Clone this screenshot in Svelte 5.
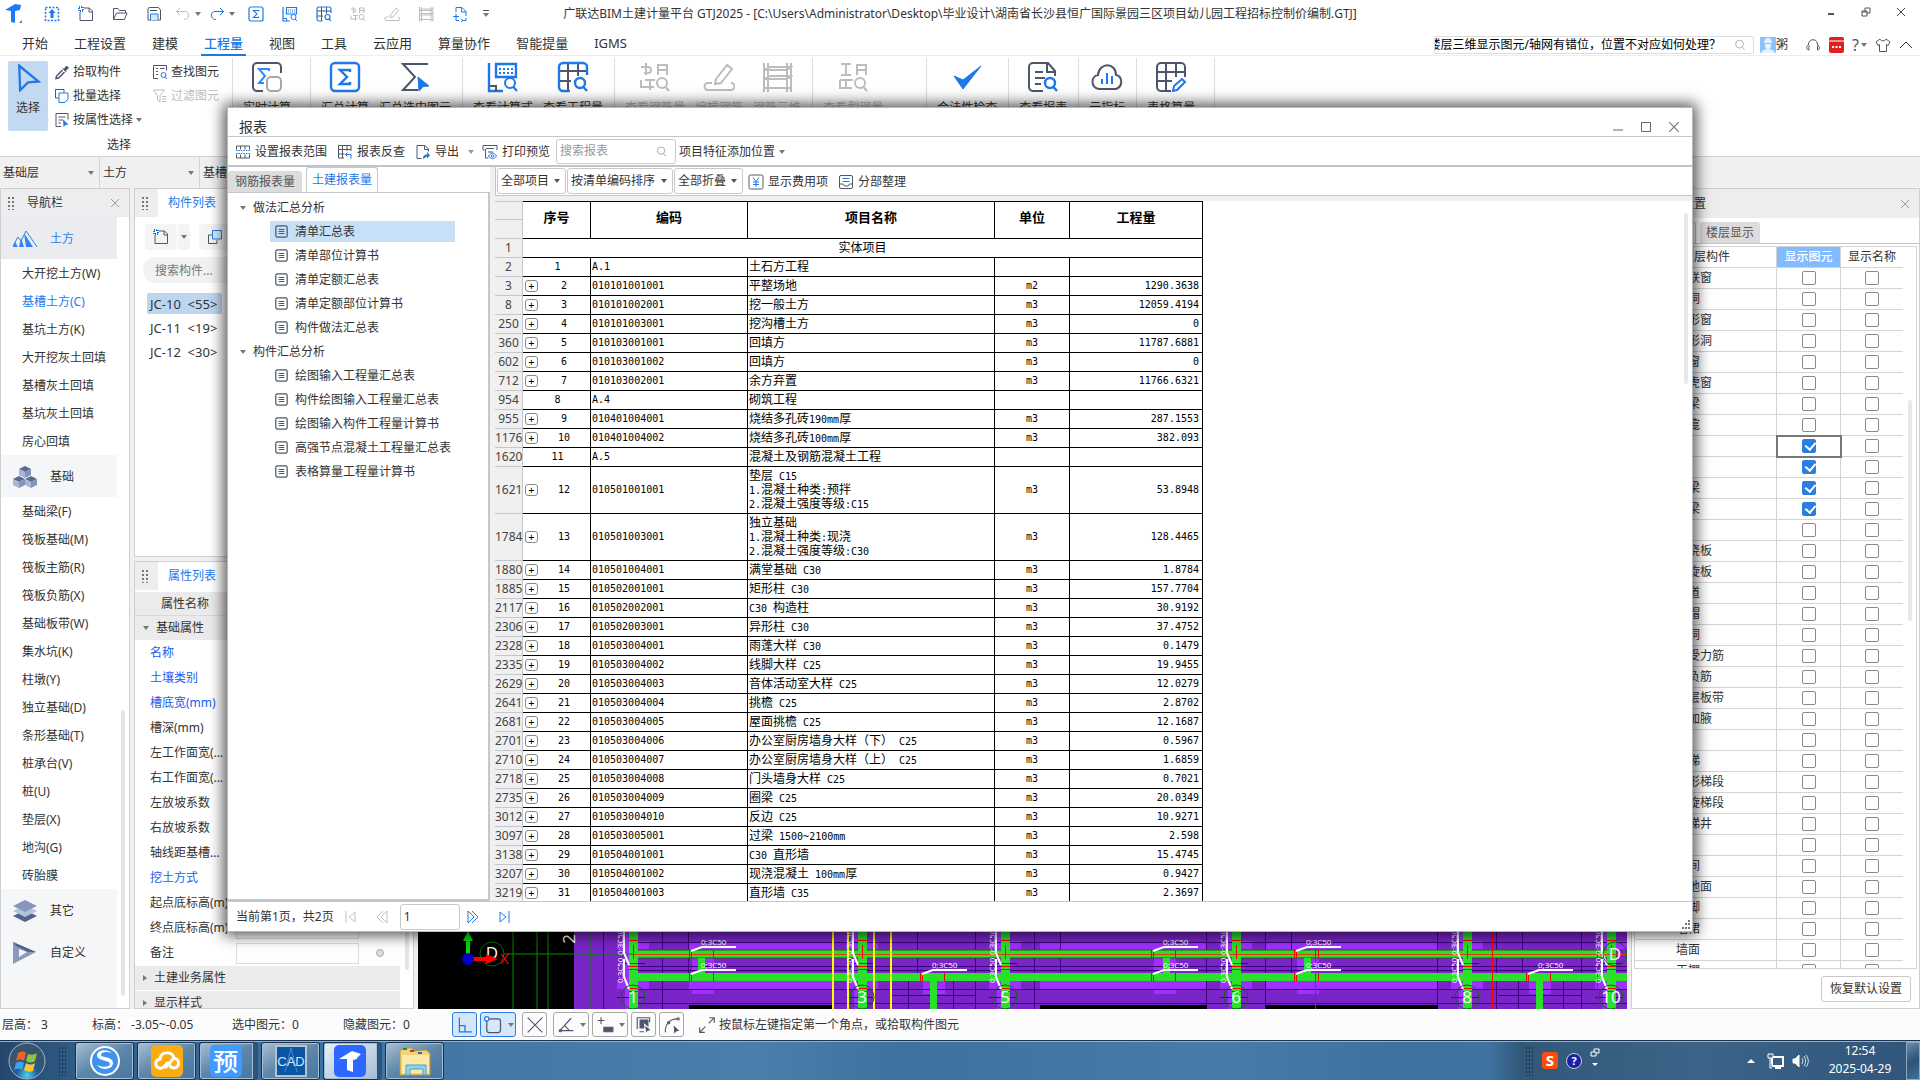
<script lang="ts">
  type Bill = { line: number; no: number | string; code: string; name: string; unit?: string; qty?: string };

  const search = '<circle cx="23" cy="22" r="5"/><path d="M26.5 26l3.5 4"/>';

  const icons: Record<string, string> = {
    sigmaBox: '<g stroke="var(--accent)"><rect x="2" y="2" width="28" height="28" rx="4" stroke-width="2.4"/><path d="M21 11V9H11l7 7-7 7h10v-2" stroke-width="2.4"/></g>',
    sigmaCursor: '<path d="M29 3H4l12 13L4 29h15"/><path d="M19 16l11 9-6 .6L20 30z" fill="var(--accent)" stroke="var(--accent)" stroke-width="1"/>',
    realtime: '<path d="M12 30H6a4 4 0 0 1-4-4V6a4 4 0 0 1 4-4h20a4 4 0 0 1 4 4v6"/><path d="M18 10V8H8l6 7-6 7h5" stroke="#2f8bff"/><rect x="16" y="16" width="14" height="14" rx="4" stroke="#a8a8a8" fill="#fff"/>',
    formula: '<g stroke="var(--accent)"><path d="M2 2v28h14M9 3h20v13H9z" stroke-width="2.4"/><path d="M12 8h15M12 12h15" stroke-dasharray="2 2"/>' + search + '</g><path d="M3 25h6v5"/>',
    gridSearch: '<path d="M2 10h28M2 20h12M11 2v28M21 2v13"/><g stroke="var(--accent)" stroke-width="2.4"><path d="M13 30H6a4 4 0 0 1-4-4V6a4 4 0 0 1 4-4h20a4 4 0 0 1 4 4v8"/>' + search + '</g>',
    rebarSearch: '<path d="M2 6h7a3 3 0 0 1 0 6H5M7 2v12M19 14V4h9v10M19 9h9M2 19v7h13M6 19h10M11 19v10"/>' + search,
    rebarPen: '<path d="M9 22H5a3 3 0 0 0 0 7h23a3 3 0 0 0 0-7M13 18L24 4l5 4-11 14-6 1z"/>',
    rebar3d: '<path d="M3 2v29M7 2v29M26 2v29M30 2v29M3 9h23l4-3H9zM3 18h23l4-3H9zM3 27h27"/>',
    steelSearch: '<path d="M4 3h10M9 3v11M4 14h10M20 14V4h9v10M20 9h9M3 19v8h12M3 19h13M9 19v8"/>' + search,
    check: '<path d="M3 15l9 13L30 5 12 19z" fill="var(--accent)" stroke="var(--accent)" stroke-width="1"/>',
    report: '<path d="M16 30H6a4 4 0 0 1-4-4V6a4 4 0 0 1 4-4h15l7 8v5M20 3v8h8M8 11h8M8 17h10M8 23h6"/><g stroke="var(--accent)" stroke-width="2.4">' + search + '</g>',
    cloud: '<path d="M8 28h17c8-3 6-13 0-14C25 1 8 1 7 14c-7 1-8 12 1 14z"/><path d="M11 23v-5M16 23V12M21 23v-8" stroke="var(--accent)"/>',
    tablePen: '<path d="M16 30H6a4 4 0 0 1-4-4V6a4 4 0 0 1 4-4h20a4 4 0 0 1 4 4v10M2 11h28M2 20h15M11 2v28M21 2v14"/><path d="M18 30l1-5 8-7 3 3-8 8z" stroke="var(--accent)"/>',
    pointer: '<path d="M6 2l22 18-12 1-9 9z" fill="none" stroke="var(--accent)" stroke-width="2.6"/>',
    up: '<rect x="3" y="3" width="26" height="26" stroke="var(--accent)" stroke-width="3" stroke-dasharray="4 3"/><path d="M16 6l7 8h-4v10h-6V14H9z" fill="var(--accent)" stroke="none"/>',
    fresh: '<path d="M12 4h11l6 6v19H4V12M22 4v8h7"/><path d="M2 2h8v8H2z" stroke="var(--accent)" stroke-dasharray="2 2" stroke-width="4"/>',
    open: '<path d="M3 27V5h9l3 4h12v5M3 27l6-13h21l-5 13z"/>',
    save: '<path d="M4 28V6a3 3 0 0 1 3-3h18l4 5v20zM8 9h14"/><path d="M9 28V16h15v12" stroke="var(--accent)" fill="#d9e9fc"/>',
    undo: '<path d="M10 4l-7 7 7 7M3 11h17c10 0 10 16-2 16"/>',
    redo: '<path d="M22 4l7 7-7 7M29 11H12C2 11 2 27 14 27" stroke="var(--accent)"/>',
    insert: '<path d="M8 12V3h12l8 8v9M19 3v9h9M20 29h8v-5M2 21h12M8 15v14h6M18 25l4 4-4 3" stroke="var(--accent)"/>',
    dropper: '<path d="M17 8l8 8M20 11l5-7 4 4-7 6z" fill="currentColor"/><path d="M17 12L5 24l-1 5 5-1 12-12" stroke-width="3"/>',
    batch: '<path d="M9 20H3V3h17v6"/><path d="M10 10h18v12l-6 7H10z" stroke="var(--accent)"/>',
    attrSelect: '<path d="M14 29H4V3h24v12M9 10h14M9 16h9M9 22h5"/><path d="M18 15l11 10-6 1-4 4z" fill="var(--accent)" stroke="none"/>',
    findPart: '<path d="M12 29H3V3h26v10M8 9h4M16 9h9M8 15h4M8 21h4"/><g stroke="var(--accent)">' + search + '</g>',
    filter: '<path d="M3 4h22L16 15v13l-5-4v-9zM20 17h9M20 22h9M20 27h9"/>',
    range: '<path d="M3 11V4h26v7M3 21v7h26v-7M11 4v7M20 4v7M11 21v7M20 21v7"/><path d="M2 13h28M2 19h28" stroke="var(--accent)" stroke-dasharray="3 2"/>',
    backCheck: '<path d="M28 14V3H3v25h11M3 11h25M3 20h12M11 3v25M20 3v11"/><path d="M21 17l-4 4 4 4M17 21h11v8" stroke="var(--accent)"/>',
    exportDoc: '<path d="M13 29H4V3h16l7 7v5M19 3v8h8"/><path d="M16 30c0-7 3-9 8-9v-5l6 7-6 6v-4z" fill="var(--accent)" stroke="none"/>',
    preview: '<path d="M5 12H2V3h28v9M8 9h16M7 10v18h6M12 16h10"/><path d="M13 24c5-8 11-8 16 0-5 7-11 7-16 0z" stroke="var(--accent)"/><circle cx="21" cy="24" r="2.5" stroke="var(--accent)"/>',
    fee: '<rect x="2" y="2" width="28" height="28" rx="3"/><path d="M10 7l6 8 6-8M10 16h12M10 21h12M16 15v11" stroke="var(--accent)"/>',
    arrange: '<path d="M6 3h20a3 3 0 0 1 3 3v20a3 3 0 0 1-3 3H6a3 3 0 0 1-3-3V6a3 3 0 0 1 3-3zM3 20h7l3 4h7l3-4h6"/><path d="M9 9h14M9 15h14" stroke="var(--accent)"/>',
    sheet: '<rect x="2" y="2" width="28" height="28" rx="4" stroke-width="3"/><path d="M9 11h14M9 16h14M9 21h14" stroke-width="2.6"/>',
    magnify: '<circle cx="15" cy="14" r="9"/><path d="M21 21l6 7"/>',
    headset: '<path d="M8 26C2 26 2 17 7 16 6 2 26 2 25 16c5 1 5 10 0 10v-9M8 26v-9"/>',
    shirt: '<path d="M10 4L2 10l4 7 3-2v14h14V15l3 2 4-7-8-6c-2 5-10 5-12 0z"/>',
    lines: '<path d="M7 4v23h20M7 17h9v10" stroke="var(--accent)" stroke-width="2"/>',
    box: '<rect x="6" y="6" width="22" height="22" rx="4"/><circle cx="6" cy="6" r="3.5" stroke="var(--accent)" fill="#fff"/>',
    cross: '<path d="M3 3l26 26M29 3L3 29"/>',
    angle: '<path d="M25 4L5 26h24M14 17l8 9"/><circle cx="6" cy="26" r="2"/>',
    plusBox: '<path d="M3 8h12M9 2v12"/><path d="M14 20h16v8H14z" fill="currentColor"/>',
    stack: '<path d="M9 7h14v14H9z" fill="currentColor"/><path d="M4 23V3h22v8M8 28h8"/><path d="M17 15l13 11-7 1-4 5z" fill="currentColor" stroke="#fff"/>',
    curve: '<path d="M4 29C4 14 12 5 26 5"/><circle cx="27" cy="5" r="2"/><circle cx="10" cy="12" r="2"/><path d="M19 17l10 9-5 1-4 4z" fill="currentColor" stroke="none"/>',
    resize: '<path d="M19 13L29 3M20 3h9v9M13 19L3 29M3 20v9h9"/>',
    overlap: '<path d="M10 12H3v17h17v-7"/><path d="M11 3h18v17H11z" stroke="var(--accent)" fill="#d9e9fc"/>'
  };

  const quick = [
    ['up', ''], ['fresh', ''], ['open', ''], ['save', ''], ['undo', 'dim drop'], ['redo', 'drop'], ['sigmaBox', ''],
    ['formula', 'blue'], ['gridSearch', ''], ['rebarSearch', 'dim'], ['rebarPen', 'dim'], ['rebar3d', 'dim'], ['insert', '']
  ];
  const menus = ['开始', '工程设置', '建模', '工程量', '视图', '工具', '云应用', '算量协作', '智能提量', 'IGMS'];

  const ribbon: { wide?: string; off?: boolean; tools: string[][] }[] = [
    { wide: 'wide', tools: [['realtime', '实时计算']] },
    { tools: [['sigmaBox', '汇总计算'], ['sigmaCursor', '汇总选中图元']] },
    { tools: [['formula', '查看计算式'], ['gridSearch', '查看工程量']] },
    { off: true, tools: [['rebarSearch', '查看钢筋量'], ['rebarPen', '编辑钢筋'], ['rebar3d', '钢筋三维']] },
    { off: true, wide: 'wider', tools: [['steelSearch', '查看型钢量']] },
    { tools: [['check', '合法性检查']] },
    { tools: [['report', '查看报表']] },
    { tools: [['cloud', '云指标']] },
    { wide: 'wide', tools: [['tablePen', '表格算量']] }
  ];

  const earthItems = ['大开挖土方(W)', '基槽土方(C)', '基坑土方(K)', '大开挖灰土回填', '基槽灰土回填', '基坑灰土回填', '房心回填'];
  const baseItems = ['基础梁(F)', '筏板基础(M)', '筏板主筋(R)', '筏板负筋(X)', '基础板带(W)', '集水坑(K)', '柱墩(Y)', '独立基础(D)', '条形基础(T)', '桩承台(V)', '桩(U)', '垫层(X)', '地沟(G)', '砖胎膜'];
  const parts = ['JC-10  <55>', 'JC-11  <19>', 'JC-12  <30>'];

  const props = [
    { name: '名称', key: true, value: 'JC-10' },
    { name: '土壤类别', key: true, value: '三类土' },
    { name: '槽底宽(mm)', key: true, value: '' },
    { name: '槽深(mm)', value: '' },
    { name: '左工作面宽(mm)', value: '' },
    { name: '右工作面宽(mm)', value: '' },
    { name: '左放坡系数', value: '0' },
    { name: '右放坡系数', value: '0' },
    { name: '轴线距基槽左边线', value: '' },
    { name: '挖土方式', key: true, value: '' },
    { name: '起点底标高(m)', value: '' },
    { name: '终点底标高(m)', value: '' },
    { name: '备注', value: '' }
  ];

  const reports = [
    { group: '做法汇总分析', items: ['清单汇总表', '清单部位计算书', '清单定额汇总表', '清单定额部位计算书', '构件做法汇总表'] },
    { group: '构件汇总分析', items: ['绘图输入工程量汇总表', '构件绘图输入工程量汇总表', '绘图输入构件工程量计算书', '高强节点混凝土工程量汇总表', '表格算量工程量计算书'] }
  ];

  const bills: Bill[] = [
    { line: 2, no: 1, code: 'A.1', name: '土石方工程' },
    { line: 3, no: 2, code: '010101001001', name: '平整场地', unit: 'm2', qty: '1290.3638' },
    { line: 8, no: 3, code: '010101002001', name: '挖一般土方', unit: 'm3', qty: '12059.4194' },
    { line: 250, no: 4, code: '010101003001', name: '挖沟槽土方', unit: 'm3', qty: '0' },
    { line: 360, no: 5, code: '010103001001', name: '回填方', unit: 'm3', qty: '11787.6881' },
    { line: 602, no: 6, code: '010103001002', name: '回填方', unit: 'm3', qty: '0' },
    { line: 712, no: 7, code: '010103002001', name: '余方弃置', unit: 'm3', qty: '11766.6321' },
    { line: 954, no: 8, code: 'A.4', name: '砌筑工程' },
    { line: 955, no: 9, code: '010401004001', name: '烧结多孔砖190mm厚', unit: 'm3', qty: '287.1553' },
    { line: 1176, no: 10, code: '010401004002', name: '烧结多孔砖100mm厚', unit: 'm3', qty: '382.093' },
    { line: 1620, no: 11, code: 'A.5', name: '混凝土及钢筋混凝土工程' },
    { line: 1621, no: 12, code: '010501001001', name: '垫层 C15\n1.混凝土种类:预拌\n2.混凝土强度等级:C15', unit: 'm3', qty: '53.8948' },
    { line: 1784, no: 13, code: '010501003001', name: '独立基础\n1.混凝土种类:现浇\n2.混凝土强度等级:C30', unit: 'm3', qty: '128.4465' },
    { line: 1880, no: 14, code: '010501004001', name: '满堂基础 C30', unit: 'm3', qty: '1.8784' },
    { line: 1885, no: 15, code: '010502001001', name: '矩形柱 C30', unit: 'm3', qty: '157.7704' },
    { line: 2117, no: 16, code: '010502002001', name: 'C30 构造柱', unit: 'm3', qty: '30.9192' },
    { line: 2306, no: 17, code: '010502003001', name: '异形柱 C30', unit: 'm3', qty: '37.4752' },
    { line: 2328, no: 18, code: '010503004001', name: '雨蓬大样 C30', unit: 'm3', qty: '0.1479' },
    { line: 2335, no: 19, code: '010503004002', name: '线脚大样 C25', unit: 'm3', qty: '19.9455' },
    { line: 2629, no: 20, code: '010503004003', name: '音体活动室大样 C25', unit: 'm3', qty: '12.0279' },
    { line: 2641, no: 21, code: '010503004004', name: '挑檐 C25', unit: 'm3', qty: '2.8702' },
    { line: 2681, no: 22, code: '010503004005', name: '屋面挑檐 C25', unit: 'm3', qty: '12.1687' },
    { line: 2701, no: 23, code: '010503004006', name: '办公室厨房墙身大样（下） C25', unit: 'm3', qty: '0.5967' },
    { line: 2710, no: 24, code: '010503004007', name: '办公室厨房墙身大样（上） C25', unit: 'm3', qty: '1.6859' },
    { line: 2718, no: 25, code: '010503004008', name: '门头墙身大样 C25', unit: 'm3', qty: '0.7021' },
    { line: 2735, no: 26, code: '010503004009', name: '圈梁 C25', unit: 'm3', qty: '20.0349' },
    { line: 3012, no: 27, code: '010503004010', name: '反边 C25', unit: 'm3', qty: '10.9271' },
    { line: 3097, no: 28, code: '010503005001', name: '过梁 1500~2100mm', unit: 'm3', qty: '2.598' },
    { line: 3138, no: 29, code: '010504001001', name: 'C30 直形墙', unit: 'm3', qty: '15.4745' },
    { line: 3207, no: 30, code: '010504001002', name: '现浇混凝土 100mm厚', unit: 'm3', qty: '0.9427' },
    { line: 3219, no: 31, code: '010504001003', name: '直形墙 C35', unit: 'm3', qty: '2.3697' }
  ];

  // split a name so that ASCII runs get the half-width font
  const runs = (text: string) => text.match(/[\x00-\x7f]+|[^\x00-\x7f]+/g) ?? [];

  let layers = $state(
    [
      '门联窗', '墙洞', '带形窗', '带形洞', '飘窗', '老虎窗', '过梁', '壁龛', '#梁', '梁', '连梁', '圈梁', '#板', '现浇板',
      '螺旋板', '坡道', '柱帽', '板洞', '板受力筋', '板负筋', '楼层板带', '板加腋', '#楼梯', '楼梯', '直形梯段', '螺旋梯段',
      '楼梯井', '#装修', '房间', '楼地面', '踢脚', '墙裙', '墙面', '天棚'
    ].map((name, i) => ({ name: name.replace('#', ''), group: name.startsWith('#'), shown: i > 7 && i < 12, named: false }))
  );

  // plan view, drawn from the bottom edge of the viewport
  const axes = [
    { x: 215, n: '1' }, { x: 444, n: '3' }, { x: 587, n: '5' }, { x: 818, n: '6' }, { x: 1049, n: '8' }, { x: 1193, n: '10' }
  ];
  const tags = [[273, 28], [273, 51], [504, 51], [735, 28], [735, 51], [878, 28], [878, 51], [1110, 51]];
  const stubs = [[280, 39, 16], [512, 62, 28], [745, 39, 16], [886, 39, 16], [1118, 62, 28]];
  const voids = [[271, 143], [622, 167], [848, 172]];
</script>

{#snippet icon(name: string, size = 16)}
  <svg class="icon" width={size} height={size} viewBox="0 0 32 32" fill="none" stroke="currentColor" stroke-width="2" aria-hidden="true">{@html icons[name]}</svg>
{/snippet}

{#snippet grip()}
  <span class="grip" aria-hidden="true"></span>
{/snippet}

{#snippet closeX(size = 10)}
  <svg width={size} height={size} viewBox="0 0 10 10" stroke="currentColor" fill="none" aria-hidden="true"><path d="M1 1l8 8M9 1L1 9" /></svg>
{/snippet}

<div class="app">
  <header class="titlebar">
    <div class="quick">
      <span class="logo">
        <svg width="22" height="22" viewBox="0 0 22 22"><path d="M2 7l10-6 6 1-1 5-5 1v12l-4-1V8z" fill="#1f78ff" /><path d="M19 20v-3l-3 3z" fill="#777" /></svg>
      </span>
      {#each quick as [name, cls]}
        <button class="quick-btn {cls}" aria-label={name}>
          {@render icon(name)}
          {#if cls.includes('drop')}<i class="caret"></i>{/if}
        </button>
      {/each}
      <button class="quick-more" aria-label="更多"><i></i><i class="caret"></i></button>
    </div>
    <h1>广联达BIM土建计量平台 GTJ2025 - [C:\Users\Administrator\Desktop\毕业设计\湖南省长沙县恒广国际景园三区项目幼儿园工程招标控制价编制.GTJ]</h1>
    <div class="window-btns">
      <button aria-label="最小化"><svg width="10" height="10" viewBox="0 0 10 10"><path d="M2 7h6" stroke="#555" stroke-width="2" /></svg></button>
      <button aria-label="还原"><svg width="10" height="10" viewBox="0 0 10 10" fill="none" stroke="#555"><path d="M1 4h5v5H1zM1 5h5M4 4V1h5v5H6" /></svg></button>
      <button aria-label="关闭">{@render closeX()}</button>
    </div>
  </header>

  <nav class="menubar">
    {#each menus as menu}
      <button class:active={menu === '工程量'}>{menu}</button>
    {/each}
    <div class="menu-right">
      <label class="ask"><span>楼层三维显示图元/轴网有错位，位置不对应如何处理？</span>{@render icon('magnify', 14)}</label>
      <svg class="avatar" width="16" height="16" viewBox="0 0 16 16"><path d="M0 0h16v16H0z" fill="#8cc2fa" /><path d="M4 6a4 5 0 0 1 8 0zM5 7h6c0 4-1 5-3 5S5 11 5 7M1 16c1-3 4-4 7-4s6 1 7 4" fill="#e8f3ff" /></svg>
      <span class="user">粥</span>
      <button aria-label="客服">{@render icon('headset')}</button>
      <button aria-label="日历"><svg width="15" height="16" viewBox="0 0 15 16"><rect width="15" height="16" rx="2" fill="#e02020" /><path d="M0 4h15" stroke="#fff" /><path d="M3 10h9" stroke="#fff" stroke-width="2" stroke-dasharray="2 1.5" /></svg></button>
      <button class="help">?<i class="caret"></i></button>
      <button aria-label="皮肤">{@render icon('shirt')}</button>
      <button aria-label="收起"><svg width="14" height="10" viewBox="0 0 14 10" fill="none" stroke="#333"><path d="M1 8l6-6 6 6" /></svg></button>
    </div>
  </nav>

  <section class="ribbon">
    <div class="pick">
      <button class="pick-main">{@render icon('pointer', 28)}<span>选择</span></button>
      <div class="pick-col">
        <button>{@render icon('dropper')}拾取构件</button>
        <button>{@render icon('batch')}批量选择</button>
        <button>{@render icon('attrSelect')}按属性选择<i class="caret"></i></button>
      </div>
      <div class="pick-col second">
        <button>{@render icon('findPart')}查找图元</button>
        <button class="dim">{@render icon('filter')}过滤图元</button>
      </div>
      <p>选择</p>
    </div>
    {#each ribbon as group}
      <div class="group {group.wide ?? ''}" class:dim={group.off}>
        {#each group.tools as [name, label]}
          <button class="tool">{@render icon(name, 32)}<span>{label}</span></button>
        {/each}
      </div>
    {/each}
  </section>

  <div class="levels">
    <button>基础层<i class="caret"></i></button>
    <button>土方<i class="caret"></i></button>
    <button>基槽土方<i class="caret"></i></button>
  </div>

  <main class="work">
    <aside class="panel navigator">
      <div class="panel-head">{@render grip()}<h2>导航栏</h2><button class="close" aria-label="关闭">{@render closeX()}</button></div>
      <div class="nav-body">
        <div class="nav-list">
          <button class="category on">
            <svg width="26" height="20" viewBox="0 0 26 20"><path d="M1 17l5-9 3 4 5-10 7 10 4 6" fill="none" stroke="#2f7fe8" /><path d="M12 4l9 14h-7zM9 9l3 9H7zM3 13l3 5H1z" fill="#2f86f2" /></svg>
            土方
          </button>
          {#each earthItems as item}
            <button class="nav-item" class:on={item === '基槽土方(C)'}>{item}</button>
          {/each}
          <button class="category">
            <svg width="26" height="24" viewBox="0 0 26 24">
              {#each [[13, 1], [7, 11], [19, 11]] as [x, y]}
                <path d="M{x} {y}l6 3-6 3-6-3z" fill="#5a6b8f" /><path d="M{x - 6} {y + 3}l6 3v6l-6-3z" fill="#a9b5d4" /><path d="M{x + 6} {y + 3}l-6 3v6l6-3z" fill="#8593b8" />
              {/each}
            </svg>
            基础
          </button>
          {#each baseItems as item}
            <button class="nav-item">{item}</button>
          {/each}
          <button class="category">
            <svg width="26" height="24" viewBox="0 0 26 24"><path d="M13 11l12 6-12 6-12-6z" fill="#53648c" /><path d="M13 6l12 6-12 6-12-6z" fill="#b6c1dc" /><path d="M13 1l12 6-12 6L1 7z" fill="#8796bb" /></svg>
            其它
          </button>
          <button class="category">
            <svg width="26" height="24" viewBox="0 0 26 24"><path d="M1 1l23 10L1 23zM7 8v8l8-5z" fill="#8b99bd" fill-rule="evenodd" /><path d="M1 1l23 10h-8L4 5z" fill="#53648c" /></svg>
            自定义
          </button>
        </div>
        <div class="nav-scroll"><i></i></div>
      </div>
    </aside>

    <div class="mid">
      <section class="panel parts">
        <div class="tab-head">{@render grip()}<h2>构件列表</h2></div>
        <div class="part-tools">
          <button aria-label="新建">{@render icon('fresh')}</button>
          <button class="split" aria-label="新建选项"><i class="caret"></i></button>
          <button class="copy" aria-label="复制">{@render icon('overlap')}</button>
        </div>
        <input class="part-search" placeholder="搜索构件..." aria-label="搜索构件" />
        <ul>
          {#each parts as part, i}
            <li><button class:on={i === 0}>{part}</button></li>
          {/each}
        </ul>
      </section>

      <section class="panel attrs">
        <div class="tab-head">{@render grip()}<h2>属性列表</h2></div>
        <div class="attr-body">
          <div class="attr-list">
            <div class="attr-title">属性名称</div>
            <div class="attr-group"><i class="caret"></i>基础属性</div>
            {#each props as prop, i}
              <div class="attr-row">
                <label for="prop{i}" class:key={prop.key}>{prop.name}</label>
                <input id="prop{i}" value={prop.value} />
                <i class="dot"></i>
              </div>
            {/each}
            <div class="attr-group"><i class="caret side"></i>土建业务属性</div>
            <div class="attr-group"><i class="caret side"></i>显示样式</div>
          </div>
          <div class="attr-scroll"><i></i></div>
        </div>
      </section>
    </div>

    <section class="canvas">
      <svg width="100%" height="90" viewBox="0 0 1209 90" preserveAspectRatio="xMinYMax slice">
        <rect x="156" width="1053" height="90" fill="#7a25c8" />
        <g fill="#a030ff">
          <rect x="271" y="23" width="143" height="8" /><rect x="271" y="62" width="143" height="8" />
          <rect x="622" y="23" width="167" height="8" /><rect x="622" y="62" width="167" height="8" />
          <rect x="848" y="23" width="172" height="8" /><rect x="848" y="62" width="172" height="8" />
          {#each tags as [x, y]}<rect x={x + 1} y={y + 10} width="22" height="14" />{/each}
          {#each axes as a}
            <rect x={a.x - 16} y="22" width="32" height="8" /><rect x={a.x - 16} y="62" width="32" height="8" />
            <rect x={a.x - 8} width="4" height="90" />
          {/each}
        </g>
        <g stroke="#3f0080" fill="none" shape-rendering="crispEdges">
          <path d="M219 23h990M219 47h990M219 51h990M219 70h990M219 84h990" />
          {#each axes as a}
            <path d="M{a.x - 30} 0v90M{a.x + 29} 0v90M{a.x + 55} 0v54M{a.x - 16} 44h28M{a.x - 16} 78h28" />
          {/each}
          <path d="M490 62v28M535 62v28M1100 62v28M1145 62v28M474 76h84M1080 76h84" />
        </g>
        {#each voids as [x, w]}<rect {x} y="86" width={w} height="4" />{/each}
        <g fill="#2ae02a">
          <rect x="216" y="31" width="982" height="8" stroke="#2d5a10" /><rect x="216" y="54" width="993" height="8" />
          {#each axes as a}<rect x={a.x - 4} width="9" height="90" />{/each}
          {#each stubs as [x, y, h]}<rect {x} {y} width="7" height={h} />{/each}
        </g>
        <path d="M216 35.5h993" stroke="#e04010" />
        <g stroke="#f00" stroke-width="1" shape-rendering="crispEdges">
          {#each axes as a}
            <path d="M{a.x - 4} 21h9M{a.x - 4} 44h9M{a.x - 4} 47h9M{a.x - 4} 50h9M{a.x - 4} 69h9M{a.x - 4} 72h9M{a.x} 26v14" />
          {/each}
          {#each tags as [x, y]}<path d="M{x} {y + 3}v8M{x - 2} {y + 3}v8M{x + 22} {y + 3}v8" />{/each}
          <path d="M897 0v90M1074 0v90M1179 0v90" />
        </g>
        <path d="M415 0v90M430 0v90M456 0v90M473 0v90" stroke="#ff0" stroke-width="2" />
        <path d="M95 0v90M119 0v90M130 0v90M85 35h131M173 13v77M168 30l10 9" stroke="#008c00" />
        {#each axes as a}
          <path d="M{a.x - 9} 0v34l5 12M{a.x - 9} 40v18l5 12" fill="none" stroke="#fff" stroke-width="2" />
          <text class="vert" transform="translate({a.x - 10} 36) rotate(-90)">0:3C50</text>
          <text class="vert" transform="translate({a.x - 10} 64) rotate(-90)">0:3C50</text>
          <circle cx={a.x} cy="78" r="12" fill="none" stroke="#0a6a0a" />
          <text class="axis" x={a.x} y="84">{a.n}</text>
        {/each}
        {#each tags as [x, y]}
          <path d="M{x} {y + 4}l11-4h34" fill="none" stroke="#fff" stroke-width="2" />
          <text class="tag" x={x + 10} y={y - 2}>0;3C50</text>
        {/each}
        <circle cx="74" cy="35" r="12" fill="none" stroke="#0a6a0a" />
        <circle cx="1197" cy="35" r="12" fill="none" stroke="#0a6a0a" />
        <text class="axis" x="74" y="40">D</text>
        <text class="axis" x="1197" y="41">D</text>
        <text class="axis" transform="translate(157 20) rotate(-90)">2</text>
        <path d="M48 38V22h-3l5-10 5 10h-3v16z" fill="#0d0" />
        <path d="M54 38h14v-3l12 5-12 5v-3H54z" fill="#f00" />
        <circle cx="50" cy="40" r="6" fill="#0000c8" />
        <text class="x-axis" x="82" y="45">X</text>
      </svg>
    </section>

    <aside class="panel display">
      <div class="panel-head"><h2>显示设置</h2><button class="close" aria-label="关闭">{@render closeX()}</button></div>
      <div class="display-tabs"><button class="on">图元显示</button><button>楼层显示</button></div>
      <div class="layer-box">
        <div class="layer-list">
          <table>
            <thead><tr><th>图层构件</th><th class="pick-col-head">显示图元</th><th>显示名称</th></tr></thead>
            <tbody>
              {#each layers as layer, i}
                <tr>
                  <td class="layer-name" class:branch={layer.group}>{layer.name}</td>
                  <td class:focus={i === 8}><input type="checkbox" bind:checked={layer.shown} aria-label="{layer.name} 显示图元" /></td>
                  <td><input type="checkbox" bind:checked={layer.named} aria-label="{layer.name} 显示名称" /></td>
                </tr>
              {/each}
            </tbody>
          </table>
        </div>
        <div class="layer-scroll"><i></i></div>
      </div>
      <button class="restore">恢复默认设置</button>
    </aside>
  </main>

  <footer class="status">
    <span class="s1">层高： 3</span>
    <span class="s2">标高： -3.05~-0.05</span>
    <span class="s3">选中图元：0</span>
    <span class="s4">隐藏图元：0</span>
    <div class="snap">
      <button class="on" aria-label="正交">{@render icon('lines', 20)}</button>
      <button class="on wide" aria-label="矩形">{@render icon('box', 20)}<i class="caret"></i></button>
      <button class="gap" aria-label="交点">{@render icon('cross', 18)}</button>
      <button class="wide gap" aria-label="角度">{@render icon('angle', 18)}<i class="caret"></i></button>
      <button class="wide" aria-label="偏移">{@render icon('plusBox', 18)}<i class="caret"></i></button>
      <button aria-label="图层">{@render icon('stack', 18)}</button>
      <button aria-label="弧线">{@render icon('curve', 18)}</button>
    </div>
    {@render icon('resize', 18)}
    <span class="hint">按鼠标左键指定第一个角点，或拾取构件图元</span>
  </footer>

  <div class="taskbar">
    <button class="start" aria-label="开始">
      <svg width="38" height="38" viewBox="0 0 38 38">
        <defs><radialGradient id="orb" cy="0.9"><stop offset="0" stop-color="#4fd0f5" /><stop offset="0.6" stop-color="#1d5c92" /><stop offset="1" stop-color="#37546f" /></radialGradient></defs>
        <circle cx="19" cy="19" r="18" fill="url(#orb)" stroke="#9fb6c8" />
        <path d="M10 11c3-2 6-2 8 0l-2 8c-3-2-5-2-8 0z" fill="#f0622a" /><path d="M20 12c3 1 6 1 9-1l-2 8c-3 2-6 2-9 0z" fill="#8cc63e" />
        <path d="M8 21c3-2 5-2 8 0l-2 7c-3-2-5-1-8 0z" fill="#3aa5e8" /><path d="M18 21c3 2 6 2 9 0l-2 8c-3 1-6 1-9-1z" fill="#fcc72c" />
      </svg>
    </button>
    <span class="tray-grip"></span>
    <div class="tasks">
      <button aria-label="浏览器"><svg width="32" height="32" viewBox="0 0 32 32"><circle cx="16" cy="16" r="15" fill="#fff" /><circle cx="16" cy="16" r="13" fill="#3f93ef" /><path d="M23 8c-6-5-16-3-15 3 1 5 13 4 13 8 0 3-7 4-13 1 4 6 16 5 16-2 0-7-12-5-12-8 0-3 6-4 11-2z" fill="#fff" /></svg></button>
      <button aria-label="云盘"><svg width="32" height="32" viewBox="0 0 32 32"><rect width="32" height="32" rx="5" fill="#fbac10" /><path d="M17 17c-3 4-5 7-9 6-5-2-4-8 1-9 1-8 12-8 14-1 7 2 5 10 0 10-4 0-6-4-3-7M14 23l8-9" fill="none" stroke="#fff" stroke-width="3" /></svg></button>
      <button class="stacked"><b class="yu">预</b></button>
      <button aria-label="CAD"><svg width="32" height="32" viewBox="0 0 32 32"><rect x="1" y="1" width="30" height="30" fill="#0b55a5" stroke="#b9c1c9" stroke-width="2" /><path d="M16 3l6 24M16 3l-6 24" stroke="#7fc4ff" opacity="0.5" /><text x="16" y="21" class="cad">CAD</text></svg></button>
      <button class="stacked active" aria-label="GTJ"><svg width="32" height="32" viewBox="0 0 32 32"><rect width="32" height="32" rx="5" fill="#2c68ff" /><path d="M5 14l13-8 9 3-4 4v1l-4 1v12l-6-2V14z" fill="#fff" /></svg></button>
      <button aria-label="资源管理器"><svg width="34" height="32" viewBox="0 0 34 32"><path d="M2 6l4-3h8l2 3 12-1 4 3v22H2z" fill="#f0d37a" stroke="#b8973a" /><path d="M4 10h27v18H4z" fill="#fbe9a5" /><path d="M8 20h20v10h-3v-6H12v6H8z" fill="#8cd3f2" stroke="#4ba3cc" /><path d="M5 4h4" stroke="#1a8f2a" stroke-width="2" /><path d="M12 6h4" stroke="#c33" stroke-width="2" /><path d="M20 8h4" stroke="#36c" stroke-width="2" /></svg></button>
    </div>
    <div class="ime">
      <span class="tray-grip"></span>
      <b class="sogou">S</b>
      <b class="question">?</b>
      <svg width="10" height="20" viewBox="0 0 10 20" fill="none" stroke="#fff"><path d="M1 4h5v4H1zM4 4V1h5v4H6" /><path d="M2 15h6l-3 3z" fill="#fff" stroke="none" /></svg>
    </div>
    <div class="tray">
      <svg class="more" width="10" height="6" viewBox="0 0 10 6"><path d="M1 5l4-4 4 4z" fill="#fff" /></svg>
      <svg width="18" height="18" viewBox="0 0 18 18" fill="none" stroke="#fff"><path d="M5 5h11v9H5zM8 16h6" stroke-width="2" /><path d="M1 2h5v4H1zM3 6v10h2" fill="#46698a" /></svg>
      <svg width="18" height="18" viewBox="0 0 18 18" fill="none" stroke="#fff"><path d="M2 7h2l4-4v12l-4-4H2z" fill="#fff" /><path d="M11 6c1 2 1 4 0 6M13 4c2 3 2 7 0 10M15 3c3 4 3 8 0 12" opacity="0.8" /></svg>
    </div>
    <time>12:54<br />2025-04-29</time>
    <button class="peek" aria-label="显示桌面"></button>
  </div>

  <div class="dialog" role="dialog" aria-label="报表">
    <div class="dialog-title">
      <h2>报表</h2>
      <button aria-label="最小化"><svg width="12" height="12" viewBox="0 0 12 12"><path d="M1 9h10" stroke="#666" /></svg></button>
      <button aria-label="最大化"><svg width="12" height="12" viewBox="0 0 12 12"><path d="M1.5 1.5h9v9h-9z" fill="none" stroke="#666" /></svg></button>
      <button aria-label="关闭">{@render closeX(12)}</button>
    </div>
    <div class="dialog-tools">
      <button>{@render icon('range')}设置报表范围</button>
      <button>{@render icon('backCheck')}报表反查</button>
      <button class="export">{@render icon('exportDoc')}导出<i class="caret"></i></button>
      <button class="preview">{@render icon('preview')}打印预览</button>
      <label class="report-search"><input placeholder="搜索报表" aria-label="搜索报表" />{@render icon('magnify', 13)}</label>
      <button class="feature">项目特征添加位置<i class="caret"></i></button>
    </div>
    <div class="dialog-body">
      <div class="tree-side">
        <div class="tree-tabs"><button>钢筋报表量</button><button class="on">土建报表量</button></div>
        <ul class="tree">
          {#each reports as { group, items }}
            <li class="tree-group"><i class="caret"></i>{group}</li>
            {#each items as item}
              <li><button class:on={item === '清单汇总表'}>{@render icon('sheet', 13)}{item}</button></li>
            {/each}
          {/each}
        </ul>
      </div>
      <div class="sheet-side">
        <div class="sheet-tools">
          <span class="select"><select aria-label="项目范围"><option>全部项目</option></select></span>
          <span class="select long"><select aria-label="排序"><option>按清单编码排序</option></select></span>
          <span class="select"><select aria-label="折叠"><option>全部折叠</option></select></span>
          <button>{@render icon('fee')}显示费用项</button>
          <button class="arrange">{@render icon('arrange')}分部整理</button>
        </div>
        <div class="sheet">
          <table class="bill">
            <colgroup><col class="c-line" /><col class="c-no" /><col class="c-code" /><col class="c-name" /><col class="c-unit" /><col class="c-qty" /></colgroup>
            <thead>
              <tr>
                <th class="line"></th>
                {#each ['序号', '编码', '项目名称', '单位', '工程量'] as head}<th rowspan="2">{head}</th>{/each}
              </tr>
              <tr><th class="line"></th></tr>
            </thead>
            <tbody>
              <tr><td class="line">1</td><td class="whole" colspan="5">实体项目</td></tr>
              {#each bills as bill}
                <tr class:tall={bill.name.includes('\n')}>
                  <td class="line">{bill.line}</td>
                  <td>
                    <div class="seq">
                      {#if bill.unit}<button aria-label="展开">+</button>{/if}
                      <span class="mono">{bill.no}</span>
                    </div>
                  </td>
                  <td class="code mono">{bill.code}</td>
                  <td class="name">{#each runs(bill.name) as run}<span class:mono={run.charCodeAt(0) < 128}>{run}</span>{/each}</td>
                  <td class="unit mono">{bill.unit ?? ''}</td>
                  <td class="qty mono">{bill.qty ?? ''}</td>
                </tr>
              {/each}
            </tbody>
          </table>
          <div class="sheet-scroll"><i></i></div>
        </div>
      </div>
    </div>
    <div class="pager">
      <span>当前第1页，共2页</span>
      <button class="off" aria-label="首页"><svg width="12" height="14" viewBox="0 0 12 14"><path d="M1 1v12M10 2L4 7l6 5z" /></svg></button>
      <button class="off" aria-label="上一页"><svg width="12" height="14" viewBox="0 0 12 14"><path d="M7 1L1 7l6 6M11 1L5 7l6 6z" /></svg></button>
      <input value="1" aria-label="页码" />
      <button aria-label="下一页"><svg width="12" height="14" viewBox="0 0 12 14"><path d="M1 1v12l6-6zM5 1l6 6-6 6" /></svg></button>
      <button aria-label="末页"><svg width="12" height="14" viewBox="0 0 12 14"><path d="M11 1v12M2 2l6 5-6 5z" /></svg></button>
      <svg class="sizer" width="9" height="9" viewBox="0 0 9 9"><path d="M7 1h2M7 4h2M7 8h2M4 4h2M4 8h2M1 8h2" /></svg>
    </div>
  </div>
</div>

<style>
  :global(body) {
    background: #f0f0f0;
    overflow: hidden;
  }

  .app {
    --accent: #1f78e8;
    --line: #d4d4d4;
    position: relative;
    display: flex;
    flex-direction: column;
    height: 100vh;
    overflow: hidden;
    background: #f0f0f0;
    color: #333;
    font: 12px/16px 'Noto Sans', 'Noto Sans CJK SC', sans-serif;
    white-space: nowrap;
  }

  .app * {
    box-sizing: border-box;
  }

  h1,
  h2,
  p,
  ul {
    margin: 0;
    padding: 0;
    font-size: 12px;
    font-weight: 400;
    list-style: none;
  }

  button,
  input,
  select {
    margin: 0;
    padding: 0;
    border: 0;
    background: none;
    color: inherit;
    font: inherit;
    outline: none;
  }

  button {
    display: flex;
    align-items: center;
    white-space: nowrap;
  }

  svg {
    display: block;
    flex: none;
  }

  .icon {
    color: #4d566b;
  }

  .caret {
    flex: none;
    width: 0;
    height: 0;
    border: 3px solid transparent;
    border-top: 4px solid #777;
    border-bottom: 0;
  }

  .caret.side {
    border: 3px solid transparent;
    border-left: 4px solid #777;
    border-right: 0;
  }

  .dim {
    --accent: #bdbdbd;
    color: #bdbdbd;
  }

  .dim .icon {
    color: #bdbdbd;
  }

  .grip {
    flex: none;
    width: 7px;
    height: 14px;
    background-image: radial-gradient(circle, #777 1px, transparent 1px);
    background-size: 4px 4px;
  }

  /* title bar */
  .titlebar {
    display: grid;
    grid-template-columns: 1fr auto 1fr;
    align-items: center;
    flex: none;
    height: 27px;
    background: #fff;
  }

  .quick {
    display: flex;
    align-items: center;
  }

  .logo {
    width: 35px;
    padding-left: 3px;
  }

  .quick-btn {
    justify-content: center;
    gap: 4px;
    width: 34px;
    height: 24px;
  }

  .quick-btn.blue .icon {
    color: var(--accent);
  }

  .quick-more {
    flex-direction: column;
    gap: 2px;
    width: 18px;
    justify-content: center;
  }

  .quick-more i:first-child {
    width: 6px;
    height: 1px;
    background: #555;
  }

  .window-btns {
    display: flex;
    justify-content: flex-end;
    gap: 25px;
    padding: 0 14px 4px 0;
    color: #444;
  }

  /* menu tabs */
  .menubar {
    display: flex;
    align-items: stretch;
    flex: none;
    gap: 20px;
    height: 29px;
    padding: 0 7px 0 19px;
    border-bottom: 1px solid #ededed;
    background: #fff;
    font-size: 13px;
  }

  .menubar > button {
    padding: 5px 3px 0;
    border-bottom: 2px solid transparent;
    height: 29px;
  }

  .menubar > button.active {
    border-color: var(--accent);
    color: var(--accent);
    font-weight: 500;
  }

  .menu-right {
    display: flex;
    align-items: center;
    margin-left: auto;
    padding-top: 8px;
    font-size: 12px;
  }

  .ask {
    display: flex;
    align-items: center;
    justify-content: flex-end;
    gap: 12px;
    width: 320px;
    height: 18px;
    padding-right: 6px;
    border: 1px solid #ddd;
    border-radius: 2px;
    color: #000;
    overflow: hidden;
  }

  .ask span {
    display: flex;
    justify-content: flex-end;
    width: 288px;
    overflow: hidden;
  }

  .ask .icon {
    color: #aaa;
  }

  .avatar {
    margin-left: 6px;
  }

  .user {
    margin-right: 17px;
  }

  .menu-right button {
    margin-right: 8px;
  }

  .menu-right button:last-child {
    margin-right: 0;
  }

  .help {
    gap: 2px;
    font-size: 16px;
    color: #4d566b;
  }

  /* ribbon */
  .ribbon {
    display: flex;
    flex: none;
    height: 100px;
    padding-top: 2px;
    background: #fff;
  }

  .pick {
    display: grid;
    grid-template: 76px 1fr / 44px 98px 1fr;
    width: 233px;
    padding: 3px 0 0 8px;
    border-right: 1px solid #ddd;
  }

  .pick-main {
    flex-direction: column;
    gap: 8px;
    width: 40px;
    height: 70px;
    padding-top: 3px;
    border-radius: 2px;
    background: #c3d9f1;
  }

  .pick-col button {
    gap: 3px;
    height: 24px;
    padding: 0 0 2px 2px;
  }

  .pick p {
    grid-column: 1 / 4;
    padding-right: 2px;
    text-align: center;
  }

  .group {
    display: flex;
    gap: 10px;
    padding: 3px 11px 0 10px;
    border-right: 1px solid #ddd;
  }

  .group.wide {
    padding-right: 19px;
  }

  .group.wider {
    padding-right: 43px;
  }

  .tool {
    flex-direction: column;
    gap: 7px;
    height: 60px;
  }

  /* level selectors */
  .levels {
    display: flex;
    flex: none;
    height: 32px;
    border-top: 1px solid var(--line);
  }

  .levels button {
    justify-content: space-between;
    width: 100px;
    padding: 0 5px 0 3px;
    border-right: 1px solid var(--line);
  }

  /* docked panels */
  .work {
    display: flex;
    flex: 1;
    min-height: 0;
  }

  .panel {
    display: flex;
    flex-direction: column;
    min-height: 0;
    border: 1px solid #cfcfcf;
    background: #fff;
    overflow: hidden;
  }

  .panel-head {
    display: flex;
    align-items: center;
    flex: none;
    gap: 13px;
    height: 28px;
    padding: 0 9px 0 6px;
    background: #ededef;
  }

  .close {
    margin-left: auto;
    color: #999;
  }

  .navigator {
    flex: none;
    width: 130px;
  }

  .nav-body {
    display: flex;
    flex: 1;
    min-height: 0;
  }

  .nav-list {
    display: flex;
    flex-direction: column;
    width: 116px;
    overflow: hidden;
  }

  .category {
    flex: none;
    gap: 12px;
    height: 42px;
    padding: 2px 0 0 11px;
    background: #f5f6f8;
  }

  .category:last-child {
    flex: 1 0 auto;
    align-items: flex-start;
    height: auto;
    padding-top: 10px;
    line-height: 24px;
  }

  .category.on {
    background: #ebecf0;
    color: #2f7fe8;
  }

  .nav-item {
    flex: none;
    height: 28px;
    padding: 2px 0 0 21px;
  }

  .nav-item.on {
    color: #1a7cf0;
  }

  .nav-scroll {
    display: flex;
    flex: 1;
    align-items: flex-end;
    padding: 0 0 12px 4px;
  }

  .nav-scroll i {
    width: 4px;
    height: 286px;
    border-radius: 2px;
    background: #e4e4e4;
  }

  .mid {
    display: flex;
    flex: none;
    flex-direction: column;
    gap: 4px;
    width: 280px;
    margin: 0 4px;
  }

  .tab-head {
    display: flex;
    align-items: center;
    flex: none;
    height: 28px;
    color: #1a7cf0;
    background: linear-gradient(90deg, #ededef 23px, #fff 23px);
    padding-left: 6px;
    gap: 20px;
  }

  .parts {
    flex: none;
    height: 45%;
  }

  .part-tools {
    display: flex;
    gap: 1px;
    padding: 7px 10px;
  }

  .part-tools button {
    justify-content: center;
    width: 32px;
    height: 26px;
    border-radius: 3px;
    background: #f4f4f4;
  }

  .part-tools .split {
    width: 12px;
  }

  .part-tools .copy {
    margin-left: 8px;
  }

  .part-search {
    flex: none;
    height: 26px;
    margin: 0 8px;
    padding-left: 12px;
    border-radius: 13px;
    background: #f2f2f2;
  }

  .part-search::placeholder {
    color: #777;
  }

  .parts ul {
    padding: 10px 0 0 12px;
    font-size: 13px;
  }

  .parts li {
    height: 24px;
  }

  .parts li button {
    height: 21px;
    width: 75px;
    padding-left: 3px;
    border-radius: 2px;
    white-space: pre;
  }

  .parts li .on {
    background: #bdd6f0;
  }

  .attrs {
    flex: 1;
  }

  .attr-body {
    display: flex;
    min-height: 0;
    margin-top: 2px;
  }

  .attr-list {
    flex: none;
    width: 265px;
    overflow: hidden;
  }

  .attr-title {
    height: 24px;
    padding: 4px 0 0 26px;
    border-bottom: 1px solid #d8d8d8;
    background: #ebebeb;
  }

  .attr-group {
    display: flex;
    align-items: center;
    gap: 7px;
    height: 25px;
    padding-left: 8px;
    border-bottom: 1px solid #fff;
    background: #ebebeb;
  }

  .attr-row {
    display: flex;
    align-items: center;
    height: 25px;
    padding: 0 0 1px 15px;
  }

  .attr-row label {
    width: 80px;
    overflow: hidden;
    text-overflow: ellipsis;
  }

  .attr-row label.key {
    color: #1560f0;
  }

  .attr-row input {
    width: 123px;
    height: 21px;
    margin: 0 17px 0 6px;
    padding-left: 3px;
    border: 1px solid #ddd;
  }

  .dot {
    width: 8px;
    height: 8px;
    border: 1px solid #aaa;
    border-radius: 50%;
    background: #ddd;
  }

  .attr-scroll {
    padding: 2px 4px 38px 5px;
  }

  .attr-scroll i {
    display: block;
    width: 4px;
    height: 100%;
    border-radius: 2px;
    background: #e4e4e4;
  }

  .canvas {
    display: flex;
    flex: 1;
    align-items: flex-end;
    min-width: 0;
    margin-right: 4px;
    background: #000;
  }

  .canvas text {
    fill: #fff;
    font-family: 'Open Sans', sans-serif;
  }

  .canvas .axis {
    font-size: 17px;
    text-anchor: middle;
  }

  .canvas .tag,
  .canvas .vert {
    font-size: 8px;
  }

  .canvas .x-axis {
    fill: #f00;
    font-size: 15px;
  }

  .display {
    flex: none;
    width: 289px;
  }

  .display .panel-head {
    height: 29px;
    padding-left: 26px;
  }

  .display-tabs {
    display: flex;
    align-items: flex-end;
    flex: none;
    gap: 4px;
    height: 26px;
    padding-left: 2px;
    border-bottom: 1px solid #c4c8cc;
  }

  .display-tabs button {
    height: 21px;
    padding: 0 6px;
    border-radius: 3px 3px 0 0;
    background: #dcdcdc;
    color: #555;
  }

  .display-tabs .on {
    background: #fff;
    border: 1px solid #c4c8cc;
    border-bottom: 0;
  }

  .layer-box {
    display: flex;
    flex: 1;
    min-height: 0;
    margin: 2px 2px 0;
    border: 1px solid var(--line);
  }

  .layer-list {
    flex: 1;
    overflow: hidden;
  }

  .layer-list table {
    width: 100%;
    border-spacing: 0;
    table-layout: fixed;
  }

  .layer-list th,
  .layer-list td {
    width: 63px;
    height: 21px;
    padding: 0;
    border: 0 solid var(--line);
    border-width: 0 1px 1px 0;
    text-align: center;
    font-weight: 400;
  }

  .layer-list th:first-child {
    width: 142px;
    padding-left: 1px;
  }

  .layer-list .pick-col-head {
    width: 64px;
    background: #82bbff;
    color: #fff;
    font-weight: 500;
  }

  .layer-list .layer-name {
    padding-left: 41px;
    text-align: left;
  }

  .layer-list .branch {
    padding-left: 22px;
  }

  .layer-list .focus {
    outline: 2px solid #777;
    outline-offset: -1px;
  }

  .layer-list input {
    display: block;
    width: 14px;
    height: 14px;
    margin: 0 auto;
    appearance: none;
    border: 1px solid #8a8a8a;
    border-radius: 2px;
    background: #fff;
  }

  .layer-list input:checked {
    border-color: #2a7de1;
    background: #2a7de1;
  }

  .layer-list input:checked::before {
    content: '';
    display: block;
    width: 5px;
    height: 8px;
    margin: 0 0 0 4px;
    border: solid #fff;
    border-width: 0 2px 2px 0;
    transform: rotate(40deg);
  }

  .layer-scroll {
    width: 13px;
    padding: 153px 4px 0 5px;
  }

  .layer-scroll i {
    display: block;
    width: 4px;
    height: 221px;
    border-radius: 2px;
    background: #e8e8e8;
  }

  .restore {
    flex: none;
    align-self: flex-end;
    height: 26px;
    margin: 7px 8px 6px;
    padding: 0 8px;
    border: 1px solid #c8c8c8;
    border-radius: 3px;
  }

  /* status bar */
  .status {
    display: flex;
    align-items: center;
    flex: none;
    height: 31px;
    background: #fcfcfc;
  }

  .s1 {
    width: 92px;
    padding-left: 2px;
  }

  .s2 {
    width: 140px;
  }

  .s3 {
    width: 111px;
  }

  .s4 {
    width: 109px;
  }

  .snap {
    display: flex;
    gap: 3px;
    margin-right: 14px;
  }

  .snap button {
    justify-content: center;
    gap: 5px;
    width: 25px;
    height: 25px;
    border: 1px solid #a8a8a8;
    border-radius: 3px;
  }

  .snap .wide {
    width: 36px;
  }

  .snap .gap {
    margin-left: 3px;
  }

  .snap .on {
    border-color: #2a7de1;
    background: #d6e6fb;
  }

  .hint {
    margin-left: 3px;
  }

  /* taskbar */
  .taskbar {
    display: flex;
    align-items: center;
    flex: none;
    height: 40px;
    border-top: 1px solid #1c3450;
    box-shadow: inset 0 1px #8fb0d0;
    background: linear-gradient(90deg, #24466a 0, #2f5a84 70px, #3f74a4 340px, #4b7eab 760px, #3d719f 900px, #477ba9 1220px, #3d719f 1400px, #3f72a0 1490px, #315879 1520px, #3c6488 1700px, #2f567a);
    color: #fff;
  }

  .start {
    width: 58px;
    padding-left: 8px;
  }

  .tray-grip {
    width: 9px;
    height: 30px;
    background-image: radial-gradient(circle, #16304a 1px, transparent 1px);
    background-size: 3px 4px;
  }

  .tasks {
    display: flex;
    gap: 3px;
    margin-left: 8px;
  }

  .tasks button {
    justify-content: center;
    width: 59px;
    height: 38px;
    border: 1px solid #17324f;
    border-radius: 3px;
    box-shadow: inset 0 0 0 1px #a5bed4;
    background: linear-gradient(150deg, #a9bfd2 0, #5d86a9 50%, #4478a5);
  }

  .tasks .stacked {
    padding-right: 2px;
    border-right-width: 5px;
    border-right-color: #2d5478;
  }

  .tasks .active {
    background: linear-gradient(150deg, #e8eff6, #a3bdd5);
  }

  .yu {
    width: 32px;
    border-radius: 5px;
    background: #419bff;
    font-size: 25px;
    font-weight: 500;
    line-height: 32px;
  }

  .cad {
    fill: #cfe6ff;
    font: 400 13px 'Liberation Sans', sans-serif;
    text-anchor: middle;
  }

  .ime {
    display: flex;
    align-items: center;
    gap: 8px;
    margin-left: auto;
  }

  .sogou {
    width: 16px;
    border-radius: 3px;
    background: #fb4c10;
    font: 700 15px/17px 'Open Sans', sans-serif;
    text-align: center;
  }

  .question {
    width: 16px;
    border: 1px solid #ccd;
    border-radius: 50%;
    background: #1b1fa8;
    font: 700 11px/14px 'Open Sans', sans-serif;
    text-align: center;
  }

  .ime svg {
    margin-bottom: 6px;
  }

  .tray {
    display: flex;
    align-items: center;
    gap: 6px;
    margin: 0 12px 0 146px;
  }

  .tray .more {
    margin-right: 5px;
  }

  time {
    width: 78px;
    margin-right: 7px;
    padding-bottom: 2px;
    line-height: 18px;
    text-align: center;
  }

  .peek {
    width: 14px;
    height: 38px;
    border: 1px solid #8fa9c0;
    background: linear-gradient(150deg, #6d8ba7, #2d5478 50%, #3f6f9c);
  }

  /* report window */
  .dialog {
    position: absolute;
    top: 107px;
    right: 227px;
    bottom: 148px;
    left: 227px;
    display: flex;
    flex-direction: column;
    border: 1px solid #b4b8bc;
    background: #fff;
    box-shadow: 0 0 14px 3px rgba(0, 0, 0, 0.7);
  }

  .dialog-title {
    display: flex;
    align-items: center;
    flex: none;
    gap: 16px;
    height: 29px;
    padding: 10px 12px 0 11px;
    border-bottom: 1px solid #c4c8cc;
    color: #777;
  }

  .dialog-title h2 {
    margin-right: auto;
    color: #333;
    font-size: 14px;
  }

  .dialog-tools {
    display: flex;
    align-items: center;
    flex: none;
    gap: 10px;
    height: 30px;
    padding-left: 7px;
    border-bottom: 2px solid #c0c4c8;
  }

  .dialog-tools button {
    gap: 4px;
    padding-top: 2px;
  }

  .dialog-tools .export .caret {
    margin-left: 5px;
    border-top-color: #999;
  }

  .dialog-tools .preview {
    margin-left: -2px;
  }

  .report-search {
    display: flex;
    align-items: center;
    width: 120px;
    height: 25px;
    margin-left: -4px;
    padding: 0 7px 0 3px;
    border: 1px solid #c8c8c8;
    border-radius: 3px;
  }

  .report-search input {
    flex: 1;
    min-width: 0;
  }

  .report-search input::placeholder {
    color: #999;
  }

  .report-search .icon {
    color: #999;
  }

  .dialog-tools .feature {
    margin-left: -7px;
  }

  .dialog-body {
    display: flex;
    flex: 1;
    gap: 5px;
    min-height: 0;
    background: #f0f0f0;
  }

  .tree-side {
    display: flex;
    flex: none;
    flex-direction: column;
    width: 262px;
  }

  .tree-tabs {
    display: flex;
    align-items: flex-end;
    gap: 4px;
    height: 25px;
    background: #fff;
  }

  .tree-tabs button {
    height: 21px;
    padding: 0 7px;
    border-radius: 3px 3px 0 0;
    background: #dcdcdc;
    color: #555;
  }

  .tree-tabs .on {
    height: 25px;
    padding: 0 5px;
    border: 1px solid #c4c8cc;
    border-bottom: 0;
    background: #fff;
    color: var(--accent);
  }

  .tree {
    flex: 1;
    padding-top: 3px;
    border: solid #c4c8cc;
    border-width: 1px 2px 2px 0;
    background: #fff;
  }

  .tree li {
    height: 24px;
    padding: 1px 0 0 42px;
  }

  .tree .tree-group {
    display: flex;
    align-items: center;
    gap: 7px;
    padding: 0 0 0 12px;
  }

  .tree button {
    gap: 7px;
    width: 185px;
    height: 21px;
    padding-left: 5px;
  }

  .tree .on {
    background: #c8dff8;
  }

  .sheet-side {
    display: flex;
    flex: 1;
    flex-direction: column;
    min-width: 0;
  }

  .sheet-tools {
    display: flex;
    align-items: center;
    flex: none;
    gap: 1px;
    height: 29px;
    padding-left: 1px;
    border: solid #c4c8cc;
    border-width: 0 0 1px 1px;
    background: #fff;
  }

  .select {
    position: relative;
    width: 69px;
    height: 26px;
    border: 1px solid #c8c8c8;
    border-radius: 3px;
  }

  .select.long {
    width: 106px;
  }

  .select select {
    width: 100%;
    height: 100%;
    padding-left: 3px;
    appearance: none;
  }

  .select::after {
    content: '';
    position: absolute;
    top: 10px;
    right: 5px;
    border: 3px solid transparent;
    border-top: 4px solid #555;
    border-bottom: 0;
  }

  .sheet-tools button {
    gap: 4px;
    margin-left: 4px;
    padding-top: 2px;
  }

  .sheet-tools .arrange {
    margin-left: 9px;
  }

  .sheet {
    display: flex;
    flex: 1;
    min-height: 0;
    margin-top: 5px;
    background: #fff;
    overflow: hidden;
  }

  .bill {
    flex: none;
    align-self: flex-start;
    width: 708px;
    border-spacing: 0;
    table-layout: fixed;
    color: #000;
  }

  .c-line {
    width: 28px;
  }

  .c-no {
    width: 68px;
  }

  .c-code {
    width: 157px;
  }

  .c-name {
    width: 247px;
  }

  .c-unit {
    width: 75px;
  }

  .c-qty {
    width: 133px;
  }

  .bill td,
  .bill th {
    height: 19px;
    padding: 0;
    border: 0 solid #000;
    border-width: 0 1px 1px 0;
    line-height: 14px;
  }

  .bill th {
    border-top-width: 1px;
    padding-bottom: 6px;
    font-size: 13px;
    font-weight: 700;
  }

  .bill .line {
    border-color: #c4c8cc;
    background: #f0f0f0;
    color: #444;
    text-align: center;
  }

  .bill th.line {
    padding: 0;
  }

  .bill tr + tr th.line {
    border-top-width: 0;
  }

  .bill .tall td {
    height: 47px;
  }

  .mono {
    font-family: 'DejaVu Sans Mono', monospace;
    font-size: 10px;
  }

  /* keeps mixed lines on the 14px grid */
  .name .mono {
    line-height: 8px;
  }

  .whole,
  .unit {
    text-align: center;
  }

  .seq {
    display: flex;
    align-items: center;
    padding-left: 2px;
  }

  .seq span {
    flex: 1;
    text-align: center;
  }

  .seq button {
    justify-content: center;
    width: 13px;
    height: 12px;
    border: 1px solid #888;
    border-radius: 3px;
    font-size: 11px;
    line-height: 10px;
  }

  .bill .code,
  .bill .name {
    padding-left: 1px;
  }

  .name {
    white-space: pre;
  }

  .bill .qty {
    padding-right: 3px;
    text-align: right;
  }

  .sheet-scroll {
    margin-left: auto;
    padding: 12px 4px 0;
  }

  .sheet-scroll i {
    display: block;
    width: 4px;
    height: 171px;
    border-radius: 2px;
    background: #e8e8e8;
  }

  .pager {
    display: flex;
    align-items: center;
    flex: none;
    gap: 19px;
    height: 30px;
    padding-left: 8px;
    border-top: 1px solid #c4c8cc;
  }

  .pager span:first-child {
    margin-right: -8px;
  }

  .pager svg {
    fill: none;
    stroke: var(--accent);
  }

  .pager .off svg {
    stroke: #c0c0c0;
  }

  .pager input {
    width: 60px;
    height: 26px;
    margin: 0 -13px 0 -7px;
    padding-left: 3px;
    border: 1px solid #c8c8c8;
    border-radius: 3px;
  }

  .pager input + button {
    margin-left: 1px;
  }

  .pager .sizer {
    align-self: flex-end;
    margin: 0 2px 2px auto;
    stroke: #777;
    stroke-width: 2px;
  }
</style>
